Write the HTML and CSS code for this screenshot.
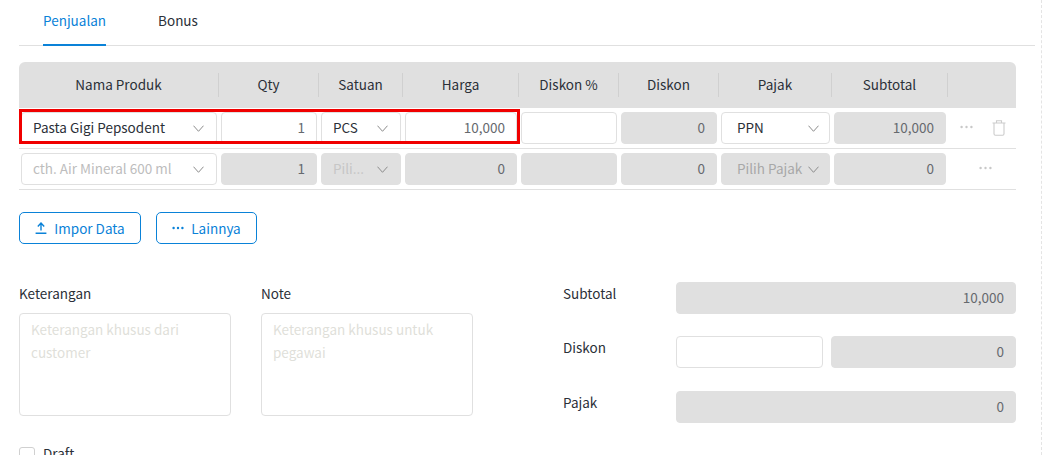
FILE: index.html
```html
<!DOCTYPE html>
<html lang="id">
<head>
<meta charset="utf-8">
<title>Penjualan</title>
<link rel="stylesheet" href="styles.css">
</head>
<body>
<div class="page">
  <nav class="tabs">
    <a class="tab active">Penjualan</a>
    <a class="tab">Bonus</a>
  </nav>

  <section class="table">
    <div class="row head">
      <div class="th">Nama Produk</div>
      <div class="th">Qty</div>
      <div class="th">Satuan</div>
      <div class="th">Harga</div>
      <div class="th">Diskon %</div>
      <div class="th">Diskon</div>
      <div class="th">Pajak</div>
      <div class="th">Subtotal</div>
      <div class="th last"></div>
    </div>

    <div class="row body">
      <div class="highlight"></div>
      <div class="cell"><div class="field select"><span class="val">Pasta Gigi Pepsodent</span><svg class="chev" viewBox="0 0 11 7"><path d="M.5.7l5 5.6 5-5.6"/></svg></div></div>
      <div class="cell"><div class="field num">1</div></div>
      <div class="cell"><div class="field select"><span class="val">PCS</span><svg class="chev" viewBox="0 0 11 7"><path d="M.5.7l5 5.6 5-5.6"/></svg></div></div>
      <div class="cell"><div class="field num">10,000</div></div>
      <div class="cell"><div class="field"></div></div>
      <div class="cell"><div class="field num off">0</div></div>
      <div class="cell"><div class="field select wide-pad"><span class="val">PPN</span><svg class="chev" viewBox="0 0 11 7"><path d="M.5.7l5 5.6 5-5.6"/></svg></div></div>
      <div class="cell"><div class="field num off">10,000</div></div>
      <div class="cell actions">
        <svg class="dots" viewBox="0 0 13 4"><circle cx="1.6" cy="2" r="1.2"/><circle cx="6.5" cy="2" r="1.2"/><circle cx="11.4" cy="2" r="1.2"/></svg>
        <svg class="trash" viewBox="0 0 14 16"><path d="M.5 3h13M4.5 3V.8h5V3M2 3v10.8c0 .9.5 1.4 1.4 1.4h7.2c.9 0 1.4-.5 1.4-1.4V3"/></svg>
      </div>
    </div>

    <div class="row body">
      <div class="cell"><div class="field select"><span class="val ph">cth. Air Mineral 600 ml</span><svg class="chev" viewBox="0 0 11 7"><path d="M.5.7l5 5.6 5-5.6"/></svg></div></div>
      <div class="cell"><div class="field num off">1</div></div>
      <div class="cell"><div class="field select off"><span class="val faint">Pili...</span><svg class="chev" viewBox="0 0 11 7"><path d="M.5.7l5 5.6 5-5.6"/></svg></div></div>
      <div class="cell"><div class="field num off">0</div></div>
      <div class="cell"><div class="field off"></div></div>
      <div class="cell"><div class="field num off">0</div></div>
      <div class="cell"><div class="field select off wide-pad"><span class="val dim">Pilih Pajak</span><svg class="chev" viewBox="0 0 11 7"><path d="M.5.7l5 5.6 5-5.6"/></svg></div></div>
      <div class="cell"><div class="field num off">0</div></div>
      <div class="cell actions center">
        <svg class="dots" viewBox="0 0 13 4"><circle cx="1.6" cy="2" r="1.2"/><circle cx="6.5" cy="2" r="1.2"/><circle cx="11.4" cy="2" r="1.2"/></svg>
      </div>
    </div>
  </section>

  <div class="buttons">
    <button class="btn btn-import"><svg class="btn-icon" viewBox="0 0 12 12"><path d="M6 8.6V1M2.8 4.4 6 1l3.2 3.4M.6 11.2h10.8"/></svg>Impor Data</button>
    <button class="btn btn-more"><svg class="btn-dots" viewBox="0 0 12 4"><circle cx="1.6" cy="2" r="1.2"/><circle cx="6" cy="2" r="1.2"/><circle cx="10.4" cy="2" r="1.2"/></svg>Lainnya</button>
  </div>

  <div class="lower">
    <div class="notes">
      <div class="note">
        <label class="note-label">Keterangan</label>
        <div class="textarea">Keterangan khusus dari customer</div>
      </div>
      <div class="note">
        <label class="note-label">Note</label>
        <div class="textarea">Keterangan khusus untuk pegawai</div>
      </div>
    </div>
    <div class="totals">
      <div class="total-row"><span class="total-label">Subtotal</span><div class="field num off">10,000</div></div>
      <div class="total-row two"><span class="total-label">Diskon</span><div class="field"></div><div class="field num off">0</div></div>
      <div class="total-row third"><span class="total-label">Pajak</span><div class="field num off">0</div></div>
    </div>
  </div>

  <label class="draft"><span class="check"></span><span class="draft-text">Draft</span></label>
</div>
<div class="scroll-edge"></div>
</body>
</html>
```

FILE: styles.css
```css
* { box-sizing: border-box; }
html { height: 100%; overflow: hidden; }
body {
  margin: 0;
  height: 455px;
  overflow: hidden;
  background: #fff;
  color: #2b3038;
  font-family: "Noto Sans CJK JP", "Noto Sans", sans-serif;
  font-size: 13.5px;
  line-height: 20px;
  display: flex;
}
.page { width: 1016px; margin-left: 19px; flex: none; }
.scroll-edge { margin-left: 6px; width: 2px; border-left: 1px dashed #e4e4e4; }

.tabs { display: flex; height: 46px; border-bottom: 1px solid #e0e0e0; padding-left: 24px; gap: 52px; }
.tab { height: 46px; padding-top: 10px; color: #2b3038; }
.tab.active { color: #0a82d8; border-bottom: 2px solid #0a82d8; }

.table { margin-top: 16px; width: 997px; }
.row { display: grid; grid-template-columns: 200px 100px 84px 116px 100px 100px 113px 116px 68px; position: relative; }
.head { background: #e0e0e0; height: 46px; border-radius: 6px 6px 0 0; align-items: center; }
.th { height: 24px; line-height: 23px; text-align: center; border-right: 1px solid #d0d0d0; }
.th.last { border-right: 0; }
.body { height: 41px; border-bottom: 1px solid #e0e0e0; padding-top: 4px; }
.cell { padding: 0 2px; }
.field {
  height: 32px;
  border: 1px solid #e0e0e0;
  border-radius: 4px;
  background: #fff;
  line-height: 29px;
}
.num { text-align: right; padding-right: 11px; color: #66696e; }
.off { background: #e0e0e0; border-color: #e0e0e0; color: #66696e; }
.select { display: flex; align-items: center; justify-content: space-between; padding: 0 12px 0 11px; }
.wide-pad { padding-left: 15px; padding-right: 10px; }
.val { min-width: 0; white-space: nowrap; margin-top: -2px; }
.ph { color: #bdbdbd; }
.faint { color: #c6c6c6; }
.dim { color: #a8a8a8; }
.chev { width: 11px; height: 7px; flex: none; margin-left: 4px; fill: none; stroke: #8c8c8c; stroke-width: 1; }
.highlight {
  position: absolute;
  left: 0;
  top: 1px;
  width: 501px;
  height: 35px;
  border: 3px solid #f00000;
  pointer-events: none;
  z-index: 2;
}
.actions { display: flex; align-items: center; height: 32px; padding-left: 12px; gap: 19px; }
.actions.center { justify-content: center; padding: 0 0 0 6px; }
.dots { width: 13px; height: 4px; fill: #c8c8c8; flex: none; margin-top: -2px; }
.trash { width: 14px; height: 16px; flex: none; fill: none; stroke: #cccccc; stroke-width: 1.1; }

.buttons { display: flex; gap: 15px; margin-top: 22px; }
.btn {
  height: 32px;
  border: 1px solid #0a82d8;
  border-radius: 5px;
  background: #fff;
  color: #0a82d8;
  font: inherit;
  display: flex;
  align-items: center;
  justify-content: center;
  padding: 0;
}
.btn-import { width: 122px; }
.btn-more { width: 101px; }
.btn-icon { width: 12px; height: 12px; margin-right: 7px; fill: none; stroke: #0a82d8; stroke-width: 1.4; }
.btn-dots { width: 12px; height: 4px; margin-right: 7px; fill: #0a82d8; }

.lower { display: flex; margin-top: 38px; width: 997px; }
.notes { display: flex; gap: 30px; width: 544px; padding-top: 1px; }
.note { width: 212px; }
.note-label { display: block; height: 30px; }
.textarea {
  height: 103px;
  border: 1px solid #e0e0e0;
  border-radius: 4px;
  padding: 4px 11px;
  line-height: 23px;
  color: #dfdfda;
}
.totals { width: 453px; display: flex; flex-direction: column; }
.total-row { display: grid; grid-template-columns: 113px 1fr; height: 32px; margin-bottom: 22px; }
.total-row.two { grid-template-columns: 113px 147px 185px; }
.total-row.two .field:last-child { margin-left: 8px; width: 185px; }
.total-row.third { margin-top: 1px; margin-bottom: 0; }
.total-label { line-height: 22px; }

.draft { display: flex; gap: 8px; margin-top: 24px; align-items: flex-start; height: 16px; }
.check { width: 16px; height: 16px; border: 1px solid #d0d0d0; border-radius: 3px; flex: none; }
.draft-text { margin-top: -4px; }
```
